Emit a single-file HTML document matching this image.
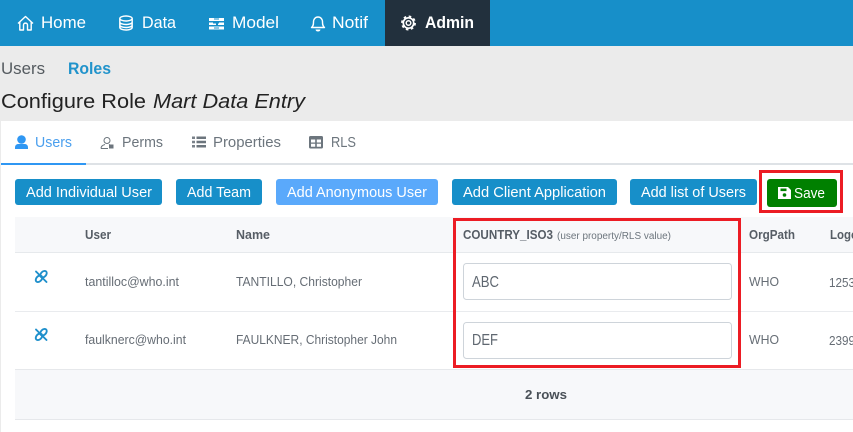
<!DOCTYPE html>
<html><head><meta charset="utf-8"><style>
html,body{margin:0;padding:0;width:853px;height:432px;overflow:hidden;background:#fff}
svg{display:block}
text{font-family:"Liberation Sans",sans-serif;white-space:pre}
.n{fill:#fff;font-size:16.500px}
.b{fill:#fff;font-size:14.500px}
.t{fill:#6c757d;font-size:15px}
.c{fill:#666d75;font-size:12.500px}
.h{fill:#565d65;font-size:12.500px;font-weight:bold}
</style></head><body>
<svg width="853" height="432" viewBox="0 0 853 432" xmlns="http://www.w3.org/2000/svg">
<rect width="853" height="432" fill="#ebebeb"/>
<rect x="1" y="121" width="852" height="311" fill="#fff"/>
<rect width="853" height="46" fill="#178fc9"/>
<rect x="385" width="105" height="46" fill="#22303d"/>

<!-- nav icons -->
<g fill="none" stroke="#fff" stroke-width="1.400">
<path d="M18 23.500L25.500 16.500L33 23.500M19.800 22V30H23.500V25C23.500 22.500 27.500 22.500 27.500 25V30H31.200V22" stroke-linejoin="round"/>
<ellipse cx="126" cy="18.500" rx="6.200" ry="2.500"/>
<path d="M119.800 18.500V27.500C119.800 29 123 30 126 30C129 30 132.200 29 132.200 27.500V18.500M119.800 22C119.800 23.500 123 24.500 126 24.500C129 24.500 132.200 23.500 132.200 22M119.800 25C119.800 26.500 123 27.500 126 27.500C129 27.500 132.200 26.500 132.200 25"/>
<path d="M311.500 27.500C313.500 26 313.500 24 313.500 22C313.500 19 315.500 17 318 17C320.500 17 322.500 19 322.500 22C322.500 24 322.500 26 324.500 27.500Z" stroke-linejoin="round"/>
</g>
<path d="M315.500 29.500H320.500C320.200 31 319.200 31.500 318 31.500C316.800 31.500 315.800 31 315.500 29.500Z" fill="#fff"/>
<path d="M209 18H224V21H209ZM209 22.500H216V25H209ZM218 22.500H224V25H218ZM209 26.500H224V29.500H209Z" fill="#fff"/>
<path d="M214 19H219M213 23H219M214 28H219" stroke="#178fc9" stroke-width="1"/>
<g fill="none" stroke="#fff">
<circle cx="408.500" cy="23" r="5.200" stroke-width="1.700"/>
<circle cx="408.500" cy="23" r="6.600" stroke-width="1.700" stroke-dasharray="2.600 2.580"/>
<circle cx="408.500" cy="23" r="2.300" stroke-width="1.500"/>
</g>

<text class="n" x="41" y="28" textLength="45" lengthAdjust="spacingAndGlyphs">Home</text>
<text class="n" x="142" y="28" textLength="34" lengthAdjust="spacingAndGlyphs">Data</text>
<text class="n" x="232" y="28" textLength="47" lengthAdjust="spacingAndGlyphs">Model</text>
<text class="n" x="332" y="28" textLength="36" lengthAdjust="spacingAndGlyphs">Notif</text>
<text class="n" x="425" y="28" textLength="49" lengthAdjust="spacingAndGlyphs" font-weight="bold">Admin</text>

<text x="1" y="74" font-size="16.500" fill="#555b60" textLength="44" lengthAdjust="spacingAndGlyphs">Users</text>
<text x="68" y="74" font-size="16.500" font-weight="bold" fill="#2193cb" textLength="43" lengthAdjust="spacingAndGlyphs">Roles</text>
<text x="1" y="108" font-size="20.500" fill="#222" textLength="145" lengthAdjust="spacingAndGlyphs">Configure Role</text>
<text x="153" y="108" font-size="20.500" font-style="italic" fill="#222" textLength="152" lengthAdjust="spacingAndGlyphs">Mart Data Entry</text>

<!-- tabs -->
<rect x="1" y="163" width="852" height="2" fill="#dee2e6"/>
<rect x="1" y="163" width="85" height="2" fill="#2f97f3"/>
<circle cx="21.500" cy="139.500" r="4.300" fill="#2f97f3"/>
<path d="M15 149V147.500C15 145.200 16.500 144 18.500 144H24.500C26.500 144 28 145.200 28 147.500V149Z" fill="#2f97f3"/>
<text x="35" y="147" font-size="15" fill="#4a9fee" textLength="37" lengthAdjust="spacingAndGlyphs">Users</text>
<g fill="none" stroke="#6c757d" stroke-width="1">
<circle cx="107" cy="140.500" r="3"/>
<path d="M101 148.500C101 146 103 145 105 144.500M109 144.500L110 145"/>
<path d="M101 148.500H108"/>
</g>
<rect x="109" y="144.500" width="4.500" height="4" fill="#6c757d"/>
<text class="t" x="122" y="147" textLength="41" lengthAdjust="spacingAndGlyphs">Perms</text>
<path d="M192 136.500H195V139H192ZM192 140.800H195V143.300H192ZM192 145H195V147.500H192Z" fill="#7a828a"/>
<path d="M196.500 136.500H206V139H196.500ZM196.500 140.800H206V143.300H196.500ZM196.500 145H206V147.500H196.500Z" fill="#6c757d"/>
<text class="t" x="213" y="147" textLength="68" lengthAdjust="spacingAndGlyphs">Properties</text>
<rect x="309" y="136" width="14" height="12.500" rx="1.500" fill="#6c757d"/>
<path d="M311 139.500H315.200V142.500H311ZM316.800 139.500H321V142.500H316.800ZM311 143.700H315.200V146.700H311ZM316.800 143.700H321V146.700H316.800Z" fill="#fff"/>
<text class="t" x="331" y="147" textLength="25" lengthAdjust="spacingAndGlyphs">RLS</text>

<!-- buttons -->
<g fill="#178fc9">
<rect x="15" y="179" width="147" height="26" rx="3"/>
<rect x="176" y="179" width="86" height="26" rx="3"/>
<rect x="276" y="179" width="162" height="26" rx="3" fill="#5aa9fb"/>
<rect x="452" y="179" width="165" height="26" rx="3"/>
<rect x="630" y="179" width="127" height="26" rx="3"/>
</g>
<rect x="767" y="179" width="70" height="28" rx="3" fill="#008000"/>
<text class="b" x="26" y="197" textLength="126" lengthAdjust="spacingAndGlyphs">Add Individual User</text>
<text class="b" x="187" y="197" textLength="64" lengthAdjust="spacingAndGlyphs">Add Team</text>
<text class="b" x="287" y="197" textLength="140" lengthAdjust="spacingAndGlyphs">Add Anonymous User</text>
<text class="b" x="463" y="197" textLength="143" lengthAdjust="spacingAndGlyphs">Add Client Application</text>
<text class="b" x="641" y="197" textLength="105" lengthAdjust="spacingAndGlyphs">Add list of Users</text>
<text x="794" y="198" fill="#fff" font-size="15" textLength="31" lengthAdjust="spacingAndGlyphs">Save</text>
<path d="M778 187H788L791 190V199H778Z" fill="#fff"/>
<rect x="780.500" y="188.500" width="6" height="2.600" fill="#008000"/>
<circle cx="784.500" cy="195" r="1.800" fill="#008000"/>

<!-- table -->
<rect x="15" y="217" width="838" height="35" fill="#f7f8fa"/>
<rect x="15" y="252" width="838" height="1" fill="#e6e9ec"/>
<rect x="15" y="311" width="838" height="1" fill="#e9ebee"/>
<rect x="15" y="369" width="838" height="51" fill="#f7f8fa"/>
<rect x="15" y="369" width="838" height="1" fill="#e6e8eb"/>
<rect x="15" y="419" width="838" height="1" fill="#e6e8eb"/>

<text class="h" x="85" y="239" textLength="26" lengthAdjust="spacingAndGlyphs">User</text>
<text class="h" x="236" y="239" textLength="34" lengthAdjust="spacingAndGlyphs">Name</text>
<text class="h" x="463" y="239" textLength="90" lengthAdjust="spacingAndGlyphs">COUNTRY_ISO3</text>
<text x="557" y="239" font-size="10" fill="#6c757d" textLength="114" lengthAdjust="spacingAndGlyphs">(user property/RLS value)</text>
<text class="h" x="749" y="239" textLength="46" lengthAdjust="spacingAndGlyphs">OrgPath</text>
<text class="h" x="830" y="239" textLength="35" lengthAdjust="spacingAndGlyphs">Logon</text>

<g fill="none" stroke="#1e8fcb" stroke-width="1.900" stroke-linecap="round">
<path d="M36 271.500L46.500 282"/>
<ellipse cx="43.500" cy="274.200" rx="3.800" ry="2.600" transform="rotate(-45 43.500 274.200)"/>
<ellipse cx="39" cy="278.800" rx="3.800" ry="2.600" transform="rotate(-45 39 278.800)"/>
<path d="M36 329.500L46.500 340"/>
<ellipse cx="43.500" cy="332.200" rx="3.800" ry="2.600" transform="rotate(-45 43.500 332.200)"/>
<ellipse cx="39" cy="336.800" rx="3.800" ry="2.600" transform="rotate(-45 39 336.800)"/>
</g>

<text class="c" x="85" y="286" textLength="94" lengthAdjust="spacingAndGlyphs">tantilloc@who.int</text>
<text class="c" x="236" y="286" textLength="126" lengthAdjust="spacingAndGlyphs">TANTILLO, Christopher</text>
<text class="c" x="749" y="286" textLength="30" lengthAdjust="spacingAndGlyphs">WHO</text>
<text class="c" x="829" y="287" textLength="26" lengthAdjust="spacingAndGlyphs">1253</text>
<text class="c" x="85" y="344" textLength="101" lengthAdjust="spacingAndGlyphs">faulknerc@who.int</text>
<text class="c" x="236" y="344" textLength="161" lengthAdjust="spacingAndGlyphs">FAULKNER, Christopher John</text>
<text class="c" x="749" y="344" textLength="30" lengthAdjust="spacingAndGlyphs">WHO</text>
<text class="c" x="829" y="345" textLength="26" lengthAdjust="spacingAndGlyphs">2399</text>

<rect x="463.500" y="263.500" width="268" height="36" rx="3" fill="#fff" stroke="#ced4da"/>
<rect x="463.500" y="322.500" width="268" height="36" rx="3" fill="#fff" stroke="#ced4da"/>
<text x="472" y="287" font-size="16" fill="#5f6770" textLength="27" lengthAdjust="spacingAndGlyphs">ABC</text>
<text x="472" y="345" font-size="16" fill="#5f6770" textLength="26" lengthAdjust="spacingAndGlyphs">DEF</text>
<text x="525" y="399" font-size="13" font-weight="bold" fill="#495057" textLength="42" lengthAdjust="spacingAndGlyphs">2 rows</text>

<!-- red highlights -->
<g fill="none" stroke="#ec1c24" stroke-width="3">
<rect x="760.500" y="171.500" width="81" height="40"/>
<rect x="454.500" y="219.500" width="285" height="147"/>
</g>
</svg>
</body></html>
